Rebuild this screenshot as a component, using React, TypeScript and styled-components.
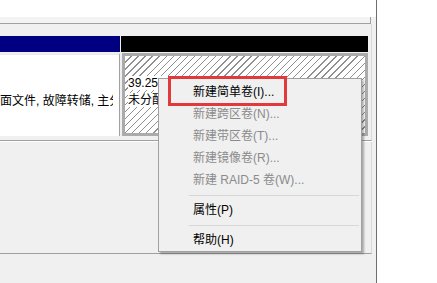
import React from "react";
import styled, { createGlobalStyle } from "styled-components";

const GlobalStyle = createGlobalStyle`
  html, body {
    margin: 0;
    padding: 0;
    background: #fff;
  }
  body {
    font-family: "Liberation Sans", "Noto Sans CJK SC", sans-serif;
    font-size: 12px;
    color: #000;
  }
  #root {
    width: 437px;
    height: 283px;
    overflow: hidden;
  }
`;

const Screen = styled.div`
  position: relative;
  display: flex;
  width: 437px;
  height: 283px;
  overflow: hidden;
`;

const MainPane = styled.div`
  width: 376px;
  flex-shrink: 0;
  display: flex;
  flex-direction: column;
  background: #f0f0f0;
  border-right: 1px solid #6f6f6f;
  box-shadow: 1px 0 0 #cfcfcf;
`;

const SidePane = styled.div`
  flex: 1;
  background: #fff;
`;

const ListTop = styled.div`
  height: 17px;
  background: #fff;
`;

const ListBottom = styled.div`
  width: 371px;
  height: 7px;
  box-sizing: border-box;
  background: #f3f3f3;
  border-right: 1px solid #a0a0a0;
  border-bottom: 1px solid #a0a0a0;
`;

const DiskArea = styled.div`
  width: 372px;
  height: 117px;
  box-sizing: border-box;
  padding-top: 12px;
  border-right: 1px solid #d9d9d9;
  border-bottom: 1px solid #a0a0a0;
  box-shadow: 0 1px 0 #fff;
`;

const BarRow = styled.div`
  display: flex;
  gap: 1px;
  height: 16px;
`;

const Bar = styled.div<{ $color: string; $width: number }>`
  width: ${(p) => p.$width}px;
  background: ${(p) => p.$color};
`;

const PanelRow = styled.div`
  display: flex;
  gap: 2px;
  margin-top: 1px;
  height: 83px;
`;

const VolumePanel = styled.div`
  width: 120px;
  box-sizing: border-box;
  background: #fff;
  border-top: 2px solid #ececec;
  border-right: 1px solid #a0a0a0;
  padding-top: 38px;
`;

const ClipLine = styled.div`
  width: 113px;
  overflow: hidden;
  white-space: nowrap;
  line-height: 17px;
`;

const FreePanel = styled.div`
  width: 246px;
  box-sizing: border-box;
  border: 3px solid #ababab;
  padding: 19px 0 0 3px;
  background: repeating-linear-gradient(
    135deg,
    #fff 0 4px,
    #909090 4px 5px
  );
`;

const FreeLine = styled.div`
  line-height: 17px;
  span {
    background: #fff;
    padding-right: 2px;
  }
`;

const LowerArea = styled.div`
  width: 372px;
  height: 112px;
  margin-top: 1px;
  box-sizing: border-box;
  border-right: 1px solid #d9d9d9;
  border-bottom: 1px solid #a0a0a0;
`;

const Menu = styled.div`
  position: absolute;
  left: 158px;
  top: 78px;
  width: 204px;
  box-sizing: border-box;
  padding: 2px 2px 0;
  background: #f0f0f0;
  border: 1px solid #a0a0a0;
  box-shadow: 2px 2px 2px rgba(0, 0, 0, 0.3);
`;

const MenuItem = styled.div<{ $disabled?: boolean }>`
  height: 22px;
  line-height: 22px;
  padding-left: 32px;
  white-space: nowrap;
  color: ${(p) => (p.$disabled ? "#8b8b8b" : "#000")};
`;

const MenuSep = styled.div`
  height: 8px;
  display: flex;
  align-items: center;
  padding-left: 28px;
  &::after {
    content: "";
    flex: 1;
    height: 1px;
    background: #d7d7d7;
  }
`;

const Highlight = styled.div`
  position: absolute;
  left: 168px;
  top: 76px;
  width: 119px;
  height: 30px;
  box-sizing: border-box;
  border: 3px solid #e2393d;
`;

const items = [
  { label: "新建简单卷(I)...", disabled: false },
  { label: "新建跨区卷(N)...", disabled: true },
  { label: "新建带区卷(T)...", disabled: true },
  { label: "新建镜像卷(R)...", disabled: true },
  { label: "新建 RAID-5 卷(W)...", disabled: true },
];

function App() {
  return (
    <Screen>
      <GlobalStyle />
      <MainPane>
        <ListTop />
        <ListBottom />
        <DiskArea>
          <BarRow>
            <Bar $color="#000080" $width={120} />
            <Bar $color="#000" $width={247} />
          </BarRow>
          <PanelRow>
            <VolumePanel>
              <ClipLine>面文件, 故障转储, 主分区)</ClipLine>
            </VolumePanel>
            <FreePanel>
              <FreeLine>
                <span>39.25 GB</span>
              </FreeLine>
              <FreeLine>
                <span>未分配</span>
              </FreeLine>
            </FreePanel>
          </PanelRow>
        </DiskArea>
        <LowerArea />
      </MainPane>
      <SidePane />

      {/* 右键菜单 */}
      <Menu>
        {items.map((item) => (
          <MenuItem key={item.label} $disabled={item.disabled}>
            {item.label}
          </MenuItem>
        ))}
        <MenuSep />
        <MenuItem>属性(P)</MenuItem>
        <MenuSep />
        <MenuItem>帮助(H)</MenuItem>
      </Menu>
      <Highlight />
    </Screen>
  );
}
export default App;
